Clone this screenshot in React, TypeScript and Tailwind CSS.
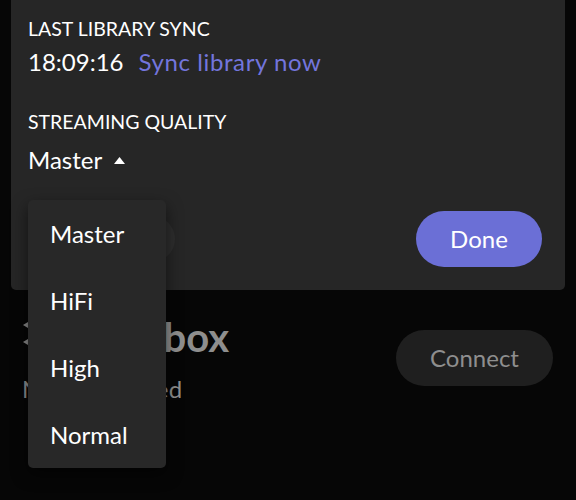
import React from 'react';

const qualities = ['Master', 'HiFi', 'High', 'Normal'];

const App = () => {
    return (
        <div
            className="relative w-[576px] h-[500px] overflow-hidden bg-[#060606] text-white"
            style={{ fontFamily: 'Lato, "Noto Sans", sans-serif' }}
        >
            {/* Settings sheet */}
            <div className="mx-[11px] h-[290px] bg-[#262626] rounded-b-[5px] flex flex-col">
                <div className="px-[17px] pt-[17px]">
                    <div className="text-[19.5px] leading-[24px] uppercase">Last library sync</div>
                    <div className="mt-[6px] flex items-center gap-[15px] text-[24px] leading-[29px]">
                        <span>18:09:16</span>
                        <span className="text-[#7375dc] tracking-[0.6px]">Sync library now</span>
                    </div>

                    <div className="mt-[34px] text-[19.5px] leading-[24px] uppercase">Streaming quality</div>
                    <div className="mt-[11px] flex items-center gap-[12px] text-[24px] leading-[29px]">
                        <span>Master</span>
                        <svg width="11" height="7" viewBox="0 0 11 7" className="mt-[1px]">
                            <path d="M5.5 0 L11 7 L0 7 Z" fill="#ffffff" />
                        </svg>
                    </div>
                </div>

                {/* Actions */}
                <div className="mt-auto flex items-center justify-between pl-[19px] pr-[23px] pb-[23px]">
                    <button className="h-[46px] w-[145px] rounded-full bg-[#2e2e2e] text-[24px] text-white">
                        Sign out
                    </button>
                    <button className="h-[56px] w-[126px] rounded-full bg-[#6b6fd6] text-[24px] text-white">
                        Done
                    </button>
                </div>
            </div>

            {/* Device row */}
            <div className="mt-[23px] flex items-center justify-between pl-[22px] pr-[23px]">
                <div>
                    <div className="flex items-center gap-[6px]">
                        <svg width="10" height="30" viewBox="0 0 10 30" className="text-[#8a8a8a]">
                            <path d="M1 3 L6 0 L6 6 Z" fill="currentColor" />
                            <path d="M1 20 L6 17 L6 23 Z" fill="currentColor" />
                        </svg>
                        <span className="text-[40px] leading-[48px] font-bold text-[#8e8e8e]">Streambox</span>
                    </div>
                    <div className="text-[24px] leading-[29px] text-[#8e8e8e] mt-[13px] tracking-[0.3px]">Not connected</div>
                </div>
                <button className="h-[56px] w-[157px] rounded-full bg-[#1f1f1f] text-[24px] text-[#8e8e8e]">
                    Connect
                </button>
            </div>

            {/* Quality menu */}
            <div className="absolute left-[28px] top-[200px] w-[138px] rounded-[5px] bg-[#282828] shadow-[0_6px_16px_rgba(0,0,0,0.55)]">
                {qualities.map((q) => (
                    <div key={q} className="h-[67px] flex items-center px-[22px] text-[24px] leading-[29px]">
                        {q}
                    </div>
                ))}
            </div>
        </div>
    );
};

export default App;
